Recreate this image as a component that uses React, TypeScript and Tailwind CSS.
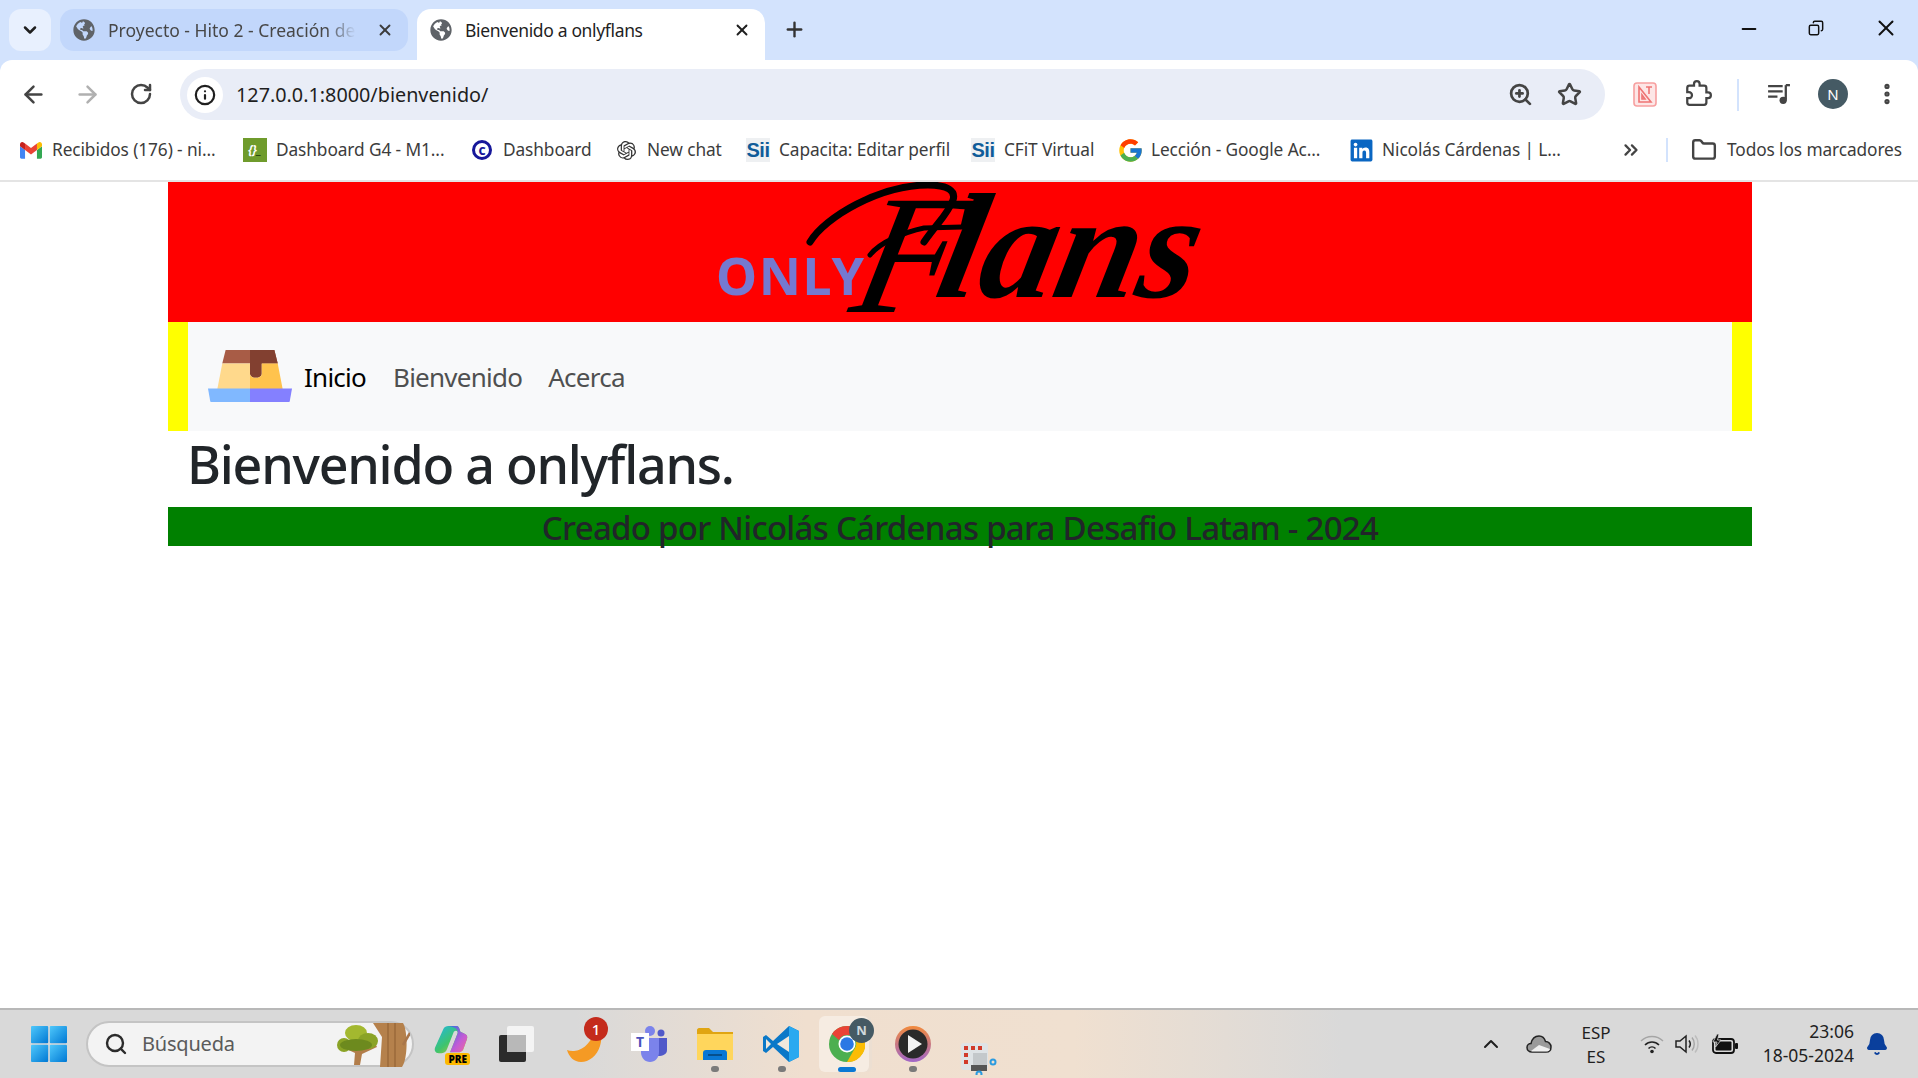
import type { ReactNode } from "react";
import {
  ArrowLeft,
  ArrowRight,
  Bell,
  ChevronDown,
  ChevronUp,
  ChevronsRight,
  Copy,
  Folder,
  Info,
  Minus,
  MoreVertical,
  Plus,
  RotateCw,
  Search,
  Star,
  X,
  ZoomIn,
} from "lucide-react";
import { FaGlobeAmericas, FaLinkedin } from "react-icons/fa";
import { FcGoogle } from "react-icons/fc";
import { SiOpenai } from "react-icons/si";

function GmailIcon() {
  return (
    <svg viewBox="0 0 24 18" className="h-[17px] w-[22px]">
      <path d="M1.6 18H5.5V8.5L0 4.4V16.4C0 17.3.7 18 1.6 18Z" fill="#4285f4" />
      <path d="M18.5 18h3.9c.9 0 1.6-.7 1.6-1.6V4.4l-5.5 4.1Z" fill="#34a853" />
      <path d="M18.5 1.4v7.1L24 4.4V2.2c0-2-2.300-3.200-3.900-2Z" fill="#fbbc04" />
      <path d="M5.500 8.500V1.400L12 6.300l6.500-4.900v7.100L12 13.400Z" fill="#ea4335" />
      <path d="M0 2.200v2.200l5.500 4.100V1.400L3.900.2C2.300-1 0 .2 0 2.200Z" fill="#c5221f" />
    </svg>
  );
}

function SiiIcon() {
  return (
    <div className="flex h-[24px] w-[24px] items-center justify-center bg-[#eef0f2] font-['Liberation_Sans',sans-serif] text-[20px] font-bold tracking-[-0.5px] text-[#0f5c99]">
      Sii
    </div>
  );
}

const bookmarks: { icon: ReactNode; label: string; left: number; width: number }[] = [
  { icon: <GmailIcon />, label: "Recibidos (176) - ni...", left: 19, width: 165 },
  {
    icon: (
      <div className="flex h-[24px] w-[24px] items-center justify-center bg-[#6f9b2c] text-[12px] font-bold italic leading-none text-white">
        {"{}"}
        <span className="text-[#2f4a10]">_</span>
      </div>
    ),
    label: "Dashboard G4 - M1...",
    left: 26,
    width: 171,
  },
  {
    icon: (
      <div className="flex h-[20px] w-[20px] items-center justify-center rounded-full border-[3px] border-[#16179a] text-[11px] font-black leading-none text-[#16179a]">
        C
      </div>
    ),
    label: "Dashboard",
    left: 23,
    width: 87,
  },
  { icon: <SiOpenai className="h-[19px] w-[19px] text-[#333]" />, label: "New chat", left: 24, width: 75 },
  { icon: <SiiIcon />, label: "Capacita: Editar perfil", left: 24, width: 169 },
  { icon: <SiiIcon />, label: "CFiT Virtual", left: 23, width: 92 },
  { icon: <FcGoogle className="h-[27px] w-[27px] shrink-0" />, label: "Lección - Google Ac...", left: 22, width: 175 },
  { icon: <FaLinkedin className="h-[25px] w-[25px] shrink-0 text-[#0a66c2]" />, label: "Nicolás Cárdenas | L...", left: 23, width: 173 },
];

function TabStrip() {
  return (
    <div className="flex h-[60px] shrink-0 items-start bg-[#d3e3fd] pl-[9px] pt-[9px]">
      <div className="flex h-[42px] w-[42px] items-center justify-center rounded-[12px] bg-[#e8f0fe]">
        <ChevronDown className="h-[20px] w-[20px] text-[#1f1f1f]" strokeWidth={3} />
      </div>
      <div className="ml-[9px] flex h-[42px] w-[348px] items-center rounded-[14px] bg-[#c2d7fb] pl-[13px] pr-[14px]">
        <FaGlobeAmericas className="h-[22px] w-[22px] shrink-0 text-[#5f6368]" />
        <span className="ml-[13px] w-[248px] overflow-hidden whitespace-nowrap text-[17.500px] text-[#474747] [mask-image:linear-gradient(90deg,#000_88%,transparent)]">
          Proyecto - Hito 2 - Creación de
        </span>
        <X className="ml-auto h-[18px] w-[18px] text-[#3b3b3b]" strokeWidth={2.500} />
      </div>
      <div className="ml-[9px] flex h-[51px] w-[348px] items-start rounded-t-[14px] bg-white pl-[13px] pr-[14px] pt-[10px]">
        <FaGlobeAmericas className="h-[22px] w-[22px] shrink-0 text-[#5f6368]" />
        <span className="ml-[13px] whitespace-nowrap text-[17.500px] leading-[22px] tracking-[-0.35px] text-[#1f1f1f]">Bienvenido a onlyflans</span>
        <X className="ml-auto mt-[2px] h-[18px] w-[18px] text-[#1f1f1f]" strokeWidth={2.500} />
      </div>
      <Plus className="ml-[18px] mt-[9px] h-[23px] w-[23px] text-[#333]" strokeWidth={2.500} />
      <Minus className="ml-[932px] mt-[9px] h-[22px] w-[22px] text-[#111]" strokeWidth={2} />
      <Copy className="ml-[48px] mt-[11px] h-[16px] w-[16px] -scale-x-100 text-[#111]" strokeWidth={2.200} />
      <X className="ml-[49px] mt-[6px] h-[26px] w-[26px] text-[#111]" strokeWidth={1.800} />
    </div>
  );
}

function ExtensionIcon() {
  return (
    <svg viewBox="0 0 24 25" className="h-[25px] w-[24px]">
      <rect x="1" y="1" width="22" height="23" rx="3" fill="#fde6e6" stroke="#f7a0a0" strokeWidth="1.600" />
      <path d="M6 5L18 20H6ZM9 13V17H12ZM16 5V12M13 5H19" fill="none" stroke="#ee7474" strokeWidth="1.600" />
    </svg>
  );
}

function PuzzleIcon() {
  return (
    <svg viewBox="0 0 24 24" className="h-[27px] w-[27px]" fill="none" stroke="#444" strokeWidth="2">
      <path d="M20.5 11H19V7c0-1.100-.9-2-2-2h-4V3.500C13 2.120 11.880 1 10.500 1S8 2.120 8 3.500V5H4c-1.100 0-1.990.9-1.990 2v3.800H3.500c1.490 0 2.700 1.210 2.700 2.700s-1.210 2.700-2.700 2.700H2V20c0 1.100.9 2 2 2h13c1.100 0 2-.9 2-2v-4h1.500c1.380 0 2.500-1.120 2.500-2.500S21.880 11 20.500 11Z" />
    </svg>
  );
}

function MediaIcon() {
  return (
    <svg viewBox="0 0 24 24" className="h-[25px] w-[25px]">
      <path d="M2 5h14M2 10h14M2 15h9" fill="none" stroke="#444" strokeWidth="2.200" />
      <path d="M19 4v14" fill="none" stroke="#444" strokeWidth="2.200" />
      <path d="M19 4h4" fill="none" stroke="#444" strokeWidth="2.200" />
      <circle cx="16.500" cy="18.500" r="3.500" fill="#444" />
    </svg>
  );
}

function Toolbar() {
  return (
    <div className="flex h-[68px] shrink-0 items-start bg-[#d3e3fd]">
      <div className="flex h-full w-full items-start rounded-t-[12px] bg-white pt-[9px]">
        <ArrowLeft className="ml-[20px] mt-[12px] h-[27px] w-[27px] text-[#444]" strokeWidth={2.200} />
        <ArrowRight className="ml-[27px] mt-[12px] h-[27px] w-[27px] text-[#b0b0b0]" strokeWidth={2.200} />
        <RotateCw className="ml-[28px] mt-[13px] h-[24px] w-[24px] text-[#444]" strokeWidth={2.500} />
        <div className="ml-[27px] flex h-[51px] w-[1425px] items-center rounded-full bg-[#e9edf7] pl-[7px] pr-[23px]">
          <div className="flex h-[36px] w-[36px] items-center justify-center rounded-full bg-white">
            <Info className="h-[22px] w-[22px] text-[#1f1f1f]" strokeWidth={2.400} />
          </div>
          <span className="ml-[13px] text-[19.800px] text-[#1f1f1f]">127.0.0.1:8000/bienvenido/</span>
          <ZoomIn className="ml-auto h-[25px] w-[25px] text-[#444]" strokeWidth={2.600} />
          <Star className="ml-[24px] h-[25px] w-[25px] text-[#444]" strokeWidth={2.400} />
        </div>
        <div className="ml-[28px] mt-[13px]">
          <ExtensionIcon />
        </div>
        <div className="ml-[28px] mt-[11px]">
          <PuzzleIcon />
        </div>
        <div className="ml-[25px] mt-[10px] h-[32px] w-[2px] bg-[#d3e3fd]" />
        <div className="ml-[27px] mt-[12px]">
          <MediaIcon />
        </div>
        <div className="ml-[27px] mt-[10px] flex h-[30px] w-[30px] items-center justify-center rounded-full bg-[#455a64] text-[15px] text-white">
          N
        </div>
        <MoreVertical className="ml-[26px] mt-[12px] h-[26px] w-[26px] text-[#444]" strokeWidth={2.800} />
      </div>
    </div>
  );
}

function BookmarksBar() {
  return (
    <div className="flex h-[54px] shrink-0 items-center border-b-2 border-[#e4e4e4] bg-white pb-[8px]">
      {bookmarks.map((b) => (
        <div key={b.label} className="flex items-center" style={{ marginLeft: b.left }}>
          <div className="flex w-[24px] items-center justify-center">{b.icon}</div>
          <span className="ml-[9px] whitespace-nowrap text-[17.300px] leading-[24px] tracking-[-0.1px] text-[#3c3c3c]" style={{ width: b.width }}>
            {b.label}
          </span>
        </div>
      ))}
      <ChevronsRight className="ml-[65px] h-[22px] w-[22px] text-[#444]" strokeWidth={2.500} />
      <div className="ml-[24px] h-[24px] w-[2px] bg-[#d3e3fd]" />
      <Folder className="ml-[23px] h-[26px] w-[26px] text-[#444]" strokeWidth={2.200} />
      <span className="ml-[10px] whitespace-nowrap text-[17.300px] tracking-[-0.1px] text-[#3c3c3c]">Todos los marcadores</span>
    </div>
  );
}

function FlanLogo() {
  return (
    <svg viewBox="0 0 100 66" className="h-[52px] w-[84px]" preserveAspectRatio="none">
      <path d="M21 0H79L83 17H17Z" fill="#a85c46" />
      <path d="M50 0H79L83 17H64V30C64 37 50 37 50 30Z" fill="#824030" />
      <path d="M17 17H50V50H11Z" fill="#ffd98c" />
      <path d="M50 17V30C50 37 64 37 64 30V17H83L89 50H50Z" fill="#ffc34d" />
      <path d="M0 49H50V66H5C3 66 3 66 2.500 64Z" fill="#80b8ff" />
      <path d="M50 49H100L97.500 64C97 66 97 66 95 66H50Z" fill="#8480ff" />
    </svg>
  );
}

function Banner() {
  return (
    <div className="flex h-[140px] justify-center bg-[#ff0000]">
      <svg viewBox="0 0 500 140" className="h-[140px] w-[500px]">
        <text x="6" y="113" fontFamily="'Noto Sans', sans-serif" fontWeight="700" fontSize="52" letterSpacing="1.500" fill="#7579d0">
          ONLY
        </text>
        <text x="165" y="130" transform="skewX(-12)" fontFamily="'Liberation Serif', serif" fontStyle="italic" fill="#000">
          <tspan fontSize="170" fontWeight="400">
            F
          </tspan>
          <tspan dx="-22" dy="-15" fontSize="150" fontWeight="700">
            lans
          </tspan>
        </text>
        <path d="M100 60C115 35 170 3 218 3C238 3 246 9 243 18C238 32 228 40 214 60" fill="none" stroke="#000" strokeWidth="7" strokeLinecap="round" />
        <path d="M160 73C170 60 195 50 214 46L252 45" fill="none" stroke="#000" strokeWidth="5" strokeLinecap="round" />
      </svg>
    </div>
  );
}

function PageContent() {
  return (
    <div className="ml-[168px] w-[1584px]">
      <Banner />
      <div className="flex h-[109px] border-x-[20px] border-[#ffff00] bg-[#f8f9fa]">
        <div className="ml-[20px] mt-[28px]">
          <FlanLogo />
        </div>
        <a className="ml-[12px] mt-[36px] text-[26px] leading-[38px] tracking-[-0.75px] text-black">Inicio</a>
        <a className="ml-[27px] mt-[36px] text-[26px] leading-[38px] tracking-[-0.75px] text-[#4f5050]">Bienvenido</a>
        <a className="ml-[26px] mt-[36px] text-[26px] leading-[38px] tracking-[-0.75px] text-[#4f5050]">Acerca</a>
      </div>
      <h1 className="h-[76px] pl-[19px] text-[52px] font-medium leading-[66px] tracking-[-1.25px] text-[#212529]">Bienvenido a onlyflans.</h1>
      <div className="h-[39px] bg-[#008000] text-center text-[33px] font-medium leading-[42px] tracking-[-0.72px] text-[#212529]">
        Creado por Nicolás Cárdenas para Desafio Latam - 2024
      </div>
    </div>
  );
}

function WindowsLogo() {
  return (
    <svg viewBox="0 0 36 36" className="h-[36px] w-[36px]">
      <defs>
        <linearGradient id="winGrad" x1="0" y1="0" x2="1" y2="1">
          <stop offset="0" stopColor="#4fc8fb" />
          <stop offset="1" stopColor="#0078d4" />
        </linearGradient>
      </defs>
      <rect x="0" y="0" width="17.200" height="17.200" rx="1" fill="url(#winGrad)" />
      <rect x="18.800" y="0" width="17.200" height="17.200" rx="1" fill="url(#winGrad)" />
      <rect x="0" y="18.800" width="17.200" height="17.200" rx="1" fill="url(#winGrad)" />
      <rect x="18.800" y="18.800" width="17.200" height="17.200" rx="1" fill="url(#winGrad)" />
    </svg>
  );
}

function TreeArt() {
  return (
    <svg viewBox="0 0 78 46" className="h-[46px] w-[78px]">
      <path d="M22 44L23 32L10 26L12 24L24 29L36 26L44 24L45 26L30 33L28 44Z" fill="#b27d4a" />
      <circle cx="12" cy="24" r="7" fill="#8aa326" />
      <ellipse cx="24" cy="12" rx="11" ry="8" fill="#a3b82f" />
      <ellipse cx="36" cy="20" rx="10" ry="8" fill="#8aa326" />
      <ellipse cx="24" cy="24" rx="16" ry="6" fill="#6d8a1e" />
      <path d="M41 2L50 16L48 46H70C76 38 76 10 71 2Z" fill="#b5814c" />
      <path d="M56 2V46M63 2V46" stroke="#9a6a3a" strokeWidth="1.500" />
      <path d="M71 24L78 12" stroke="#a9764a" strokeWidth="2.500" />
    </svg>
  );
}

function CopilotIcon() {
  return (
    <div className="relative h-[36px] w-[36px]">
      <svg viewBox="0 0 36 32" className="h-[30px] w-[34px]">
        <defs>
          <linearGradient id="copA" x1="0" y1="0" x2="1" y2="1">
            <stop offset="0" stopColor="#1fb6e8" />
            <stop offset="0.500" stopColor="#3ec46d" />
            <stop offset="1" stopColor="#f5c518" />
          </linearGradient>
          <linearGradient id="copB" x1="0" y1="0" x2="1" y2="1">
            <stop offset="0" stopColor="#2b6fe0" />
            <stop offset="0.600" stopColor="#c25bd6" />
            <stop offset="1" stopColor="#f06a9a" />
          </linearGradient>
        </defs>
        <path d="M10 3C11 1 13 0 15 0H24C26 0 27 2 28 6L32 8C35 9 36 11 35 14L31 25C30 27 28 28 26 28H17L25 8C26 5 23 4 21 6L14 24C13 27 11 29 8 29H5C1 29 0 26 1 23Z" fill="url(#copA)" />
        <path d="M15 0H24C26 0 27 2 28 6L32 8C35 9 36 11 35 14L31 25C30 27 28 28 26 28H17L25 8C26 5 24 1 15 0Z" fill="url(#copB)" />
      </svg>
      <span className="absolute bottom-[-3px] right-[0px] rounded-[3px] bg-[#fdb900] px-[3px] text-[10px] font-black leading-[12px] text-black">
        PRE
      </span>
    </div>
  );
}

function BlackBoxIcon() {
  return (
    <svg viewBox="0 0 36 36" className="h-[36px] w-[36px]">
      <rect x="8" y="0" width="27" height="26" rx="2" fill="#f4f4f4" />
      <rect x="0" y="9" width="27" height="27" rx="2" fill="#2b2b2b" />
      <rect x="8" y="9" width="19" height="17" fill="#b8b8b8" />
    </svg>
  );
}

function CrescentIcon() {
  return (
    <div className="relative h-[36px] w-[36px]">
      <svg viewBox="0 0 36 36" className="h-[36px] w-[36px]">
        <path d="M0 24C8 27 22 24 28 4C34 4 36 10 33 20C30 30 22 36 14 36C7 36 2 31 0 24Z" fill="#f59a24" />
      </svg>
      <span className="absolute right-[-5px] top-[-9px] flex h-[24px] w-[24px] items-center justify-center rounded-full bg-[#c42b1c] text-[15px] font-medium text-white">
        1
      </span>
    </div>
  );
}

function TeamsIcon() {
  return (
    <svg viewBox="0 0 36 36" className="h-[36px] w-[36px]">
      <circle cx="19" cy="5" r="5" fill="#7b83eb" />
      <circle cx="30" cy="7" r="3.500" fill="#5059c9" />
      <path d="M25 12H36V24C36 28 32 30 27 30Z" fill="#5059c9" />
      <path d="M10 12H28V26C28 32 24 36 19 36C14 36 10 32 10 26Z" fill="#7b83eb" />
      <rect x="0" y="7" width="18" height="18" fill="#ffffff" />
      <text x="9" y="21" textAnchor="middle" fontFamily="'Noto Sans', sans-serif" fontSize="14" fontWeight="700" fill="#4b53bc">
        T
      </text>
    </svg>
  );
}

function ExplorerIcon() {
  return (
    <svg viewBox="0 0 36 32" className="h-[32px] w-[36px]">
      <path d="M0 2C0 1 1 0 2 0H12L16 4H36V32H0Z" fill="#e0a512" />
      <path d="M0 6H36V32H0Z" fill="#ffd65c" />
      <path d="M6 32V25C6 23 7 22 9 22H27C29 22 30 23 30 25V32Z" fill="#0a78d4" />
      <rect x="11" y="26" width="14" height="2" fill="#064f8c" />
    </svg>
  );
}

function VsCodeIcon() {
  return (
    <svg viewBox="0 0 36 36" className="h-[36px] w-[36px]">
      <path d="M26 0L36 5V31L26 36L10 21L3 27L0 25V11L3 9L10 15Z" fill="#0a78c8" />
      <path d="M26 0L36 5V31L26 36Z" fill="#2aa9f0" />
      <path d="M26 10L14 18L26 26Z" fill="#f0e8dc" />
      <path d="M3 13L8 18L3 23Z" fill="#f0e8dc" />
    </svg>
  );
}

function ChromeIcon() {
  return (
    <svg viewBox="0 0 36 36" className="h-[36px] w-[36px]">
      <circle cx="18" cy="18" r="18" fill="#4caf50" />
      <path d="M18 0A18 18 0 0 1 34 9H18A9 9 0 0 0 10 14L3 8A18 18 0 0 1 18 0Z" fill="#ea4335" />
      <path d="M34 9A18 18 0 0 1 18 36L26 22A9 9 0 0 0 26 13Z" fill="#fbbc04" />
      <circle cx="18" cy="18" r="8.500" fill="#ffffff" />
      <circle cx="18" cy="18" r="6.800" fill="#2b78e4" />
    </svg>
  );
}

function PlayerIcon() {
  return (
    <svg viewBox="0 0 36 36" className="h-[36px] w-[36px]">
      <defs>
        <linearGradient id="ringGrad" x1="0" y1="0" x2="0" y2="1">
          <stop offset="0" stopColor="#f28a3c" />
          <stop offset="1" stopColor="#a066c8" />
        </linearGradient>
      </defs>
      <circle cx="18" cy="18" r="18" fill="url(#ringGrad)" />
      <circle cx="18" cy="18" r="14.500" fill="#2a2a2a" />
      <path d="M13 9L27 18L13 27Z" fill="#f2f2f2" />
    </svg>
  );
}

function SnipIcon() {
  return (
    <svg viewBox="0 0 36 32" className="h-[32px] w-[36px]">
      <rect x="0" y="0" width="27" height="27" rx="3" fill="#dfe3e6" />
      <path d="M3 3h4v4H3zM10 3h4v4h-4zM17 3h4v4h-4zM3 10h4v4H3zM3 17h4v4H3z" fill="#d13a2a" />
      <rect x="12" y="10" width="14" height="14" fill="#c4c8cb" />
      <rect x="10" y="22" width="16" height="6" fill="#555" />
      <circle cx="32" cy="19" r="2.500" fill="none" stroke="#2b9be0" strokeWidth="2" />
      <circle cx="18" cy="31" r="2.500" fill="none" stroke="#2b9be0" strokeWidth="2" />
    </svg>
  );
}

function OneDriveIcon() {
  return (
    <svg viewBox="0 0 26 18" className="h-[18px] w-[26px]">
      <path d="M6 17C3 17 1 15 1 12.500C1 10 3 8.500 5 8.500C6 4 9 1 13 1C16 1 18.500 3 19.500 6.500C22.500 6.500 25 9 25 12C25 15 23 17 20 17Z" fill="#9a9a9a" stroke="#222" strokeWidth="1.500" />
      <path d="M5 16L13 10L24 14C23.500 16 22 16.500 20 16.500H6Z" fill="#efefef" />
    </svg>
  );
}

function WifiIcon() {
  return (
    <svg viewBox="0 0 24 20" className="h-[20px] w-[24px]" fill="none">
      <path d="M1 7C7 1 17 1 23 7" stroke="#a5a5a5" strokeWidth="1.400" />
      <path d="M5 11C9 7 15 7 19 11" stroke="#222" strokeWidth="1.600" />
      <path d="M8.500 14.500C10.500 12.500 13.500 12.500 15.500 14.500" stroke="#222" strokeWidth="1.600" />
      <circle cx="12" cy="17.500" r="1.800" fill="#222" />
    </svg>
  );
}

function SpeakerIcon() {
  return (
    <svg viewBox="0 0 24 20" className="h-[20px] w-[24px]" fill="none">
      <path d="M1 7H5L11 2V18L5 13H1Z" stroke="#222" strokeWidth="1.500" />
      <path d="M14 6.500C15.500 8.500 15.500 11.500 14 13.500" stroke="#222" strokeWidth="1.500" />
      <path d="M17 3.500C20 7 20 13 17 16.500" stroke="#a5a5a5" strokeWidth="1.400" />
      <path d="M20 1.500C24 6 24 14 20 18.500" stroke="#bdbdbd" strokeWidth="1.400" />
    </svg>
  );
}

function BatteryIcon() {
  return (
    <svg viewBox="0 0 26 20" className="h-[20px] w-[26px]">
      <rect x="1" y="5" width="21" height="14" rx="3" fill="none" stroke="#111" strokeWidth="1.800" />
      <rect x="3.500" y="7.500" width="16" height="9" rx="1" fill="#111" />
      <rect x="23" y="9" width="3" height="6" rx="1" fill="#111" />
      <path d="M5 0L1 8H5L3.500 13L9 6H5.500L7 0Z" fill="#111" stroke="#d9d9d9" strokeWidth="0.800" />
    </svg>
  );
}

function Taskbar() {
  return (
    <div className="flex h-[70px] shrink-0 items-center border-t-2 border-[#b8b8b8] bg-[linear-gradient(90deg,#d9d9d9_0%,#d9d9d9_30%,#f0dfcf_42%,#f0e0d0_56%,#d9d9d9_70%,#d9d9d9_100%)]">
      <div className="ml-[31px]">
        <WindowsLogo />
      </div>
      <div className="ml-[19px] flex h-[46px] w-[328px] items-center rounded-full border-2 border-[#c4c4c4] bg-[#f3f3f3] pl-[16px]">
        <Search className="h-[24px] w-[24px] text-[#2b2b2b]" strokeWidth={2.400} />
        <span className="ml-[14px] text-[20px] tracking-[-0.2px] text-[#5a5a5a]">Búsqueda</span>
        <div className="ml-auto mr-[2px]">
          <TreeArt />
        </div>
      </div>
      <div className="ml-[20px]">
        <CopilotIcon />
      </div>
      <div className="ml-[29px]">
        <BlackBoxIcon />
      </div>
      <div className="ml-[32px]">
        <CrescentIcon />
      </div>
      <div className="relative ml-[28px]">
        <TeamsIcon />
      </div>
      <div className="relative ml-[30px]">
        <ExplorerIcon />
        <span className="absolute bottom-[-12px] left-[14px] h-[6px] w-[8px] rounded-full bg-[#7a7a7a]" />
      </div>
      <div className="relative ml-[30px]">
        <VsCodeIcon />
        <span className="absolute bottom-[-10px] left-[15px] h-[6px] w-[8px] rounded-full bg-[#7a7a7a]" />
      </div>
      <div className="relative ml-[20px] flex h-[56px] w-[50px] items-center rounded-[6px] bg-[#f6ece2] pl-[10px] shadow-[3px_0_0_#ecdfd2]">
        <div className="shrink-0">
          <ChromeIcon />
        </div>
        <span className="absolute right-[-5px] top-[2px] flex h-[25px] w-[25px] items-center justify-center rounded-full bg-[#455a64] text-[13px] font-bold text-[#cfd8dc]">
          N
        </span>
        <span className="absolute bottom-[0px] left-[19px] h-[5px] w-[18px] rounded-full bg-[#0a78d4]" />
      </div>
      <div className="relative ml-[26px]">
        <PlayerIcon />
        <span className="absolute bottom-[-10px] left-[14px] h-[6px] w-[8px] rounded-full bg-[#7a7a7a]" />
      </div>
      <div className="ml-[30px] mt-[30px] h-[32px] w-[36px]">
        <SnipIcon />
      </div>
      <ChevronUp className="ml-[482px] h-[24px] w-[24px] text-[#1f1f1f]" strokeWidth={2} />
      <div className="ml-[23px]">
        <OneDriveIcon />
      </div>
      <div className="ml-[29px] mt-[2px] flex w-[30px] flex-col items-center text-[17px] leading-[24px] text-[#1f1f1f]">
        <span>ESP</span>
        <span>ES</span>
      </div>
      <div className="ml-[29px]">
        <WifiIcon />
      </div>
      <div className="ml-[11px]">
        <SpeakerIcon />
      </div>
      <div className="ml-[13px]">
        <BatteryIcon />
      </div>
      <div className="ml-[21px] mt-[-2px] flex w-[95px] flex-col items-end text-[17.500px] leading-[24px] text-[#1f1f1f]">
        <span>23:06</span>
        <span>18-05-2024</span>
      </div>
      <Bell className="ml-[11px] h-[24px] w-[24px] text-[#0a3f9c]" fill="#0a3f9c" />
    </div>
  );
}

export default function App() {
  return (
    <div className="flex h-[1078px] w-[1918px] flex-col overflow-hidden bg-white font-['Noto_Sans',sans-serif]">
      <TabStrip />
      <Toolbar />
      <BookmarksBar />
      <div className="flex-1">
        <PageContent />
      </div>
      <Taskbar />
    </div>
  );
}
